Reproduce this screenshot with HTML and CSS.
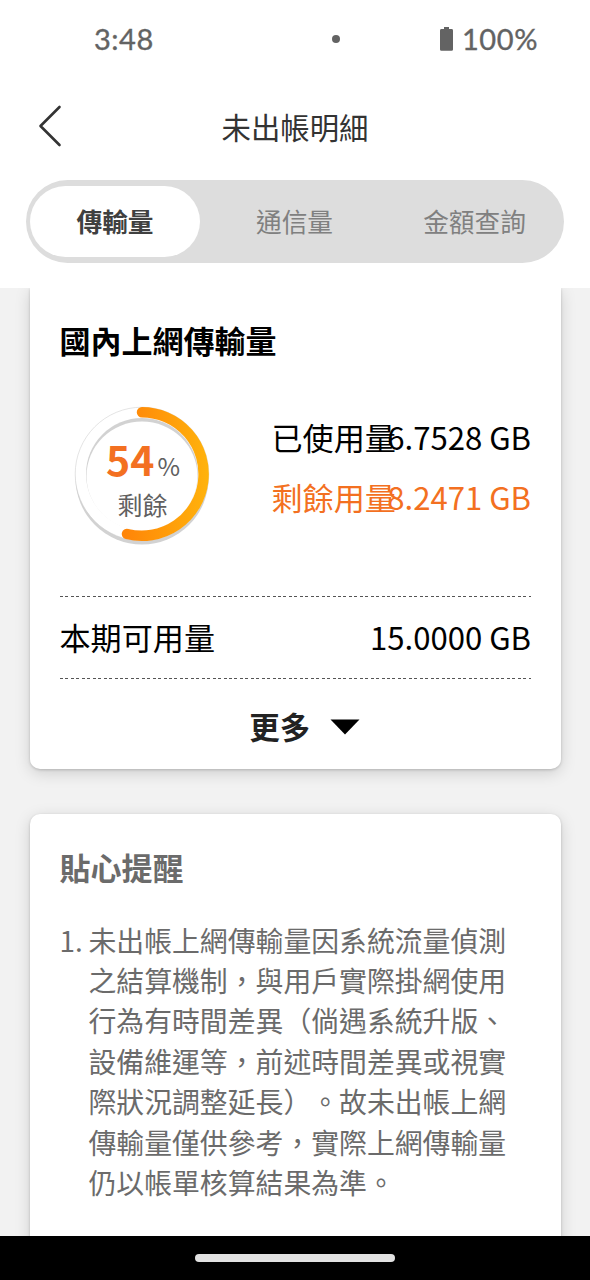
FILE: index.html
```html
<!DOCTYPE html>
<html lang="zh-Hant">
<head>
<meta charset="utf-8">
<title>未出帳明細</title>
<link rel="stylesheet" href="styles.css">
</head>
<body>
<div class="screen">
  <div class="status">
    <span class="clock">3:48</span>
    <span class="dot"></span>
    <span class="battery">
      <svg width="14" height="24" viewBox="0 0 14 24"><path d="M4 0h5v2h2.600q1.400 0 1.400 1.400v19q0 1.400-1.400 1.400H1.400Q0 23.800 0 22.400v-19Q0 2 1.400 2H4z" fill="#636363"/></svg>
      <span class="percent">100%</span>
    </span>
  </div>
  <header class="header">
    <svg class="back" width="24" height="42" viewBox="0 0 24 42"><path d="M21.500 2 2.500 21l19 19" fill="none" stroke="#333" stroke-width="2.600" stroke-linecap="round" stroke-linejoin="round"/></svg>
    <h1 class="title">未出帳明細</h1>
  </header>
  <nav class="tabs">
    <span class="tab tab-active">傳輸量</span>
    <span class="tab">通信量</span>
    <span class="tab">金額查詢</span>
  </nav>
  <main class="content">
    <section class="card usage">
      <h2 class="card-title">國內上網傳輸量</h2>
      <div class="summary">
        <div class="ring">
          <svg class="ring-art" width="138" height="142" viewBox="0 0 138 142">
            <defs>
              <linearGradient id="arc" gradientUnits="userSpaceOnUse" x1="52" y1="0" x2="136" y2="0">
                <stop offset="0" stop-color="#ff8508"/><stop offset="1" stop-color="#ffb30c"/>
              </linearGradient>
            </defs>
            <circle cx="69" cy="74" r="66.500" fill="#d2d2d2"/>
            <circle cx="69" cy="70" r="66.800" fill="#fff" stroke="#c9c9c9" stroke-width=".5"/>
            <circle cx="69" cy="70" r="56" fill="#d2d2d2"/>
            <ellipse cx="69" cy="72" rx="55.500" ry="54.500" fill="#fff"/>
            <path d="M69 8.200A61.800 61.800 0 1 1 54 130" fill="none" stroke="url(#arc)" stroke-width="10.500" stroke-linecap="round"/>
          </svg>
          <div class="ring-text">
            <div class="ring-value"><b>54</b><span>%</span></div>
            <div class="ring-label">剩餘</div>
          </div>
        </div>
        <div class="figures">
          <div class="figure"><span class="figure-label">已使用量</span><span>6.7528 GB</span></div>
          <div class="figure figure-left"><span class="figure-label">剩餘用量</span><span>8.2471 GB</span></div>
        </div>
      </div>
      <div class="rule"></div>
      <div class="total"><span>本期可用量</span><span>15.0000 GB</span></div>
      <div class="rule"></div>
      <div class="more"><span>更多</span><svg width="30" height="16" viewBox="0 0 30 16"><path d="M.5.500h29L15 15.500z" fill="#000"/></svg></div>
    </section>
    <section class="card notes">
      <h2 class="card-title">貼心提醒</h2>
      <div class="note">
        <span class="note-number">1.</span>
        <p class="note-text">未出帳上網傳輸量因系統流量偵測<br>之結算機制，與用戶實際掛網使用<br>行為有時間差異（倘遇系統升版、<br>設備維運等，前述時間差異或視實<br>際狀況調整延長）。故未出帳上網<br>傳輸量僅供參考，實際上網傳輸量<br>仍以帳單核算結果為準。</p>
      </div>
    </section>
  </main>
  <footer class="navbar"><span class="handle"></span></footer>
</div>
</body>
</html>
```
FILE: styles.css
```css
* { box-sizing: border-box; }
body { margin: 0; background: #fff; font-family: "Noto Sans CJK TC", sans-serif; color: #000; text-spacing-trim: space-all; }
h1, h2, p { margin: 0; }
svg { display: block; flex: none; }

.screen { width: 590px; height: 1280px; display: flex; flex-direction: column; overflow: hidden; background: #fff; }

.status { display: grid; grid-template-columns: 1fr auto 1fr; align-items: center; height: 78px; padding: 0 52px 0 94px; color: #636363; font: 400 29px/30px Lato, sans-serif; -webkit-text-stroke: .35px #636363; flex: none; }
.clock { letter-spacing: .5px; }
.dot { width: 8px; height: 8px; margin-left: 20px; margin-right: -20px; border-radius: 50%; background: #636363; }
.battery { display: flex; align-items: center; justify-content: flex-end; gap: 8px; }
.percent { letter-spacing: .6px; }

.header { height: 102px; flex: none; display: grid; grid-template-columns: 60px 1fr 60px; align-items: center; padding: 0 0 6px; }
.back { margin-left: 38px; }
.title { font-size: 29.400px; font-weight: 400; line-height: 44px; text-align: center; color: #333; }

.tabs { display: grid; grid-template-columns: 170px 1fr 170px; height: 83px; margin: 0 26px 25px; padding: 6px 4px; flex: none; border-radius: 42px; background: #ddd; color: #808080; font-size: 25.700px; line-height: 38px; text-align: center; }
.tab { display: flex; align-items: center; justify-content: center; border-radius: 36px; padding: 0 1px 2px 0; }
.tab-active { background: #fff; color: #404040; font-weight: 700; padding-right: 0; }

.content { flex: 1; min-height: 0; padding: 0 29.500px; overflow: hidden; background: #f2f2f2; }
.card { background: #fff; border-radius: 10px; box-shadow: 0 4px 16px rgba(0, 0, 0, .15), 0 1px 3px rgba(0, 0, 0, .18); padding: 0 29.500px 0 30px; }
.usage { height: 481px; border-radius: 0 0 10px 10px; }
.card-title { font-size: 31px; line-height: 44px; font-weight: 700; }
.usage .card-title { padding-top: 30px; }

.summary { display: flex; height: 234px; padding: 42px 0 0 13.500px; }
.ring { display: grid; width: 138px; height: 142px; }
.ring-art, .ring-text { grid-area: 1 / 1; }
.ring-text { padding: 29px 0 0 1px; text-align: center; color: #606060; }
.ring-value { display: flex; justify-content: center; align-items: baseline; gap: 3px; height: 54px; line-height: 50px; padding-left: 1px; }
.ring-value b { font-size: 41px; color: #f37021; }
.ring-value span { font-size: 24.500px; }
.ring-label { font-size: 25px; line-height: 34px; }
.figures { flex: 1; padding-left: 60.500px; margin-top: 3px; }
.figure { display: flex; justify-content: space-between; font-size: 31.100px; line-height: 60px; white-space: nowrap; }
.figure-label { width: 0; }
.figure-left { color: #f37021; }

.rule { height: 1px; background: repeating-linear-gradient(90deg, #555 0 3px, transparent 3px 5.450px); }
.total { display: flex; justify-content: space-between; height: 81px; font-size: 31.100px; line-height: 80px; }
.more { display: flex; align-items: center; justify-content: center; gap: 20px; padding: 26px 0 0 19px; font-size: 30.500px; font-weight: 700; line-height: 46px; color: #222; }
.more span { margin-top: -2px; }

.notes { height: 500px; margin-top: 45px; padding-top: 31px; color: #6b6b6b; }
.note { display: flex; margin-top: 30.500px; font-size: 27.850px; line-height: 40.400px; }
.note-number { width: 29px; flex: none; }
.note-text { white-space: nowrap; }

.navbar { height: 44px; flex: none; display: flex; justify-content: center; align-items: center; background: #000; }
.handle { width: 200px; height: 8px; border-radius: 4px; background: #e2e2e2; }
```
